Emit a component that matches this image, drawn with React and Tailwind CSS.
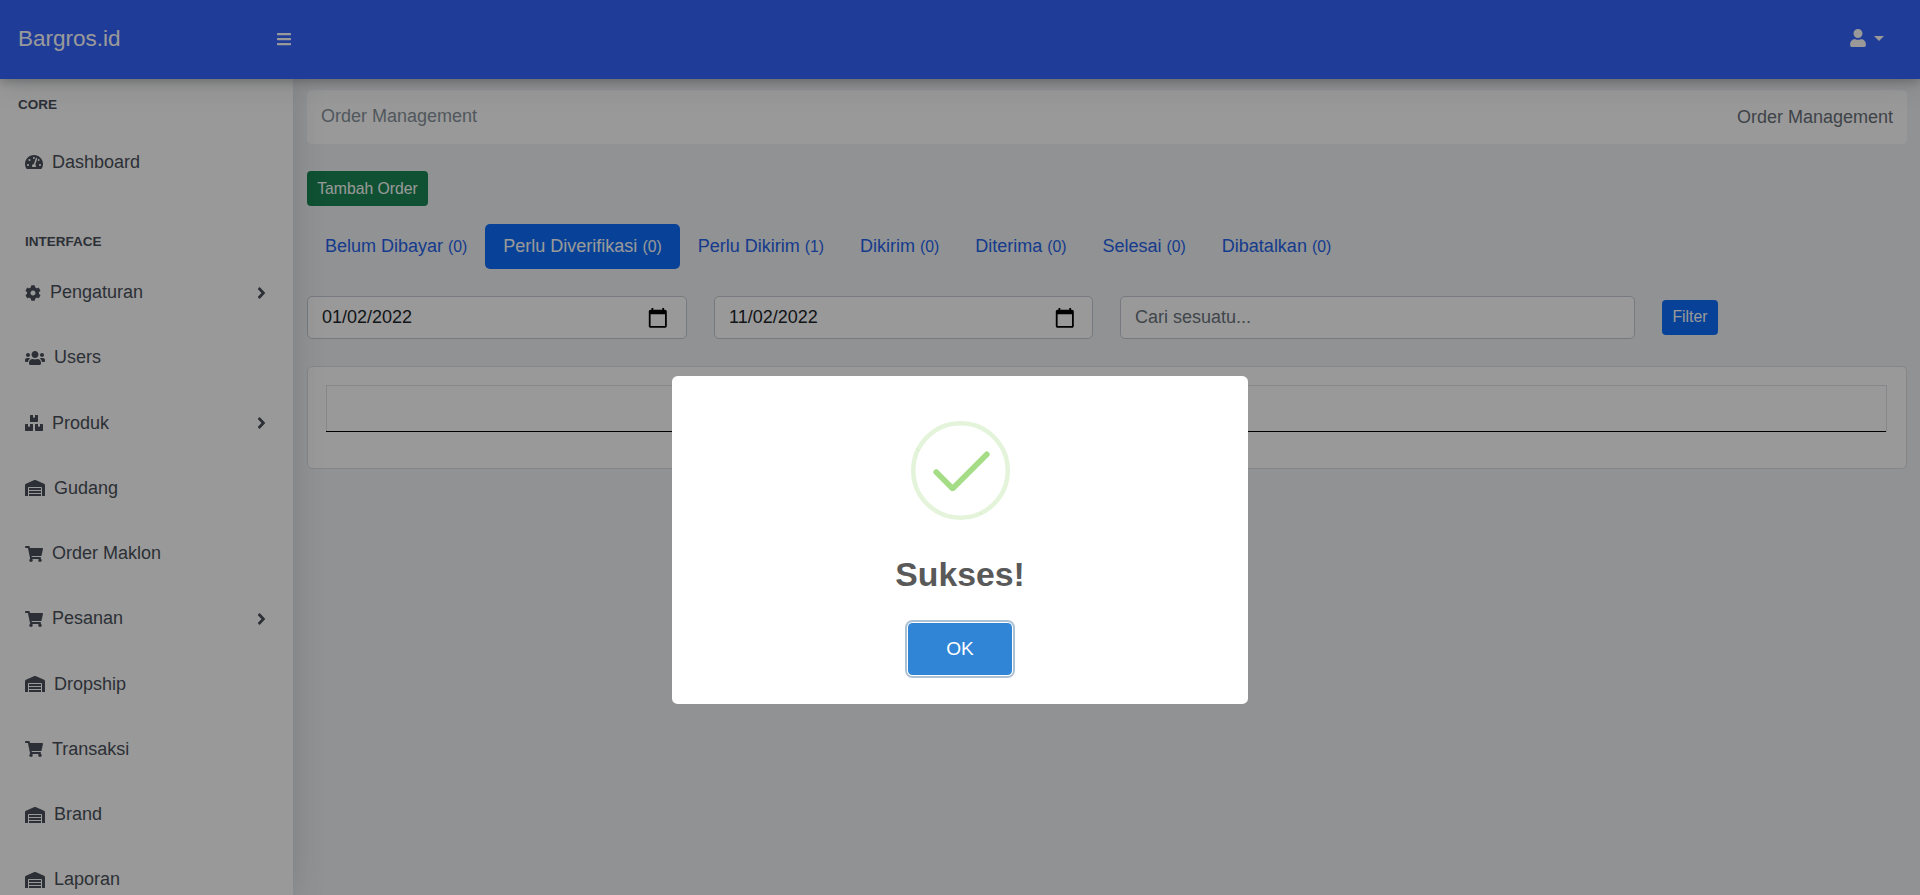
import React from "react";
import {
  FaTachometerAlt, FaCog, FaUsers, FaBoxes, FaWarehouse, FaShoppingCart,
  FaAngleRight, FaBars, FaUser,
} from "react-icons/fa";

const MENU = [
  { label: "Pengaturan", icon: FaCog, size: "w-4", arrow: true },
  { label: "Users", icon: FaUsers, size: "w-5" },
  { label: "Produk", icon: FaBoxes, size: "w-[18px]", arrow: true },
  { label: "Gudang", icon: FaWarehouse, size: "w-5" },
  { label: "Order Maklon", icon: FaShoppingCart, size: "w-[18px]" },
  { label: "Pesanan", icon: FaShoppingCart, size: "w-[18px]", arrow: true },
  { label: "Dropship", icon: FaWarehouse, size: "w-5" },
  { label: "Transaksi", icon: FaShoppingCart, size: "w-[18px]" },
  { label: "Brand", icon: FaWarehouse, size: "w-5" },
  { label: "Laporan", icon: FaWarehouse, size: "w-5" },
];

const TABS = [
  { label: "Belum Dibayar", count: 0 },
  { label: "Perlu Diverifikasi", count: 0, active: true },
  { label: "Perlu Dikirim", count: 1 },
  { label: "Dikirim", count: 0 },
  { label: "Diterima", count: 0 },
  { label: "Selesai", count: 0 },
  { label: "Dibatalkan", count: 0 },
];

function MenuItem({ label, icon: Icon, size, arrow }) {
  return (
    <a className="flex h-[65.25px] shrink-0 items-center pl-[25px] pr-[27px]">
      <Icon className={`${size} h-4 shrink-0`} />
      <span className="ml-[9px]">{label}</span>
      {arrow && <FaAngleRight className="ml-auto h-[18px] w-[9px]" />}
    </a>
  );
}

function Header() {
  return (
    <header className="relative z-20 flex h-[79px] shrink-0 items-center bg-[#3664ff] text-white shadow-[0_2.7px_31.5px_0_rgba(33,40,50,0.15),0_2px_10px_0_rgba(33,40,50,0.3)]">
      <span className="w-[277px] pb-[2px] pl-[18px] text-[22.5px] leading-[34px]">Bargros.id</span>
      <FaBars className="mb-px h-4 w-[14px]" />
      <div className="ml-auto mr-9 flex items-center gap-2 pb-[3px]">
        <FaUser className="h-[18px] w-4" />
        <span className="border-x-[5.4px] border-t-[5.4px] border-x-transparent border-t-white" />
      </div>
    </header>
  );
}

function Sidebar() {
  return (
    <aside className="relative z-10 flex w-[293px] shrink-0 flex-col overflow-hidden bg-white text-[#4a515b]">
      <h2 className="pl-[18px] pt-4 text-[13.5px] font-bold leading-5">CORE</h2>
      <div className="mt-[14.4px] flex flex-col">
        <MenuItem label="Dashboard" icon={FaTachometerAlt} size="w-[18px]" />
      </div>
      <h2 className="pl-[25px] pt-[37.6px] text-[13.5px] font-bold leading-5">INTERFACE</h2>
      <nav className="mt-[7.75px] flex flex-col">
        {MENU.map((m) => <MenuItem key={m.label} {...m} />)}
      </nav>
    </aside>
  );
}

function DateField({ value, className }) {
  return (
    <div className={`flex h-[43px] items-center justify-between rounded-[5px] border border-[#c5ccd6] bg-white pl-[14px] text-[#212529] ${className}`}>
      <span>{value}</span>
      <svg viewBox="0 0 24 24" className="size-[21.6px]" fill="#000">
        <path d="M20 3h-1V1h-2v2H7V1H5v2H4c-1.1 0-2 .9-2 2v16c0 1.1.9 2 2 2h16c1.1 0 2-.9 2-2V5c0-1.1-.9-2-2-2zm0 18H4V8h16v13z" />
      </svg>
    </div>
  );
}

function Content() {
  return (
    <main className="flex grow flex-col pl-[14px] pr-[13px] pt-[11px]">
      <div className="flex h-[54px] items-center justify-between rounded-[5px] bg-white px-[14px]">
        <span className="pb-[2px] text-[#87939c]">Order Management</span>
        <span className="text-[#69707a]">Order Management</span>
      </div>
      <button className="mt-[27px] h-[35px] w-[121px] rounded-[4px] bg-[#198754] text-[15.75px] text-white">
        Tambah Order
      </button>
      <div className="mt-[18px] flex h-[45px]">
        {TABS.map((t) => (
          <a
            key={t.label}
            className={`flex items-center whitespace-pre rounded-[5px] px-[18px] ${t.active ? "bg-[#0d6efd] text-white" : "text-[#2563eb]"}`}
          >
            <span>{t.label} <span className="text-[15.75px]">({t.count})</span></span>
          </a>
        ))}
      </div>
      <div className="mt-[27px] flex items-center">
        <DateField value="01/02/2022" className="w-[380px] pr-[17px]" />
        <DateField value="11/02/2022" className="ml-[27px] w-[379px] pr-4" />
        <div className="ml-[27px] flex h-[43px] w-[515px] items-center rounded-[5px] border border-[#c5ccd6] bg-white pl-[14px] text-[#6c757d]">
          Cari sesuatu...
        </div>
        <button className="ml-[27px] h-[35px] w-[56px] rounded-[4px] bg-[#0d6efd] pb-[2px] text-[15.75px] text-white">
          Filter
        </button>
      </div>
      <section className="mt-[27px] h-[103px] rounded-[5px] border border-[#dfdfdf] bg-white py-[18px] pl-[18px] pr-[19px]">
        <div className="h-[47px] border border-b-0 border-[#dee2e6]">
          <div className="-ml-px h-[46px] border-b border-black" />
        </div>
      </section>
    </main>
  );
}

function SuccessIcon() {
  return (
    <svg viewBox="0 0 5.5 5.5" className="size-[99px]">
      <circle cx="2.75" cy="2.75" r="2.625" fill="none" stroke="#a5dc86" strokeOpacity="0.3" strokeWidth="0.25" />
      <path d="M.3 1.52l.13.16M3.84 5.07l.13.14" stroke="#a5dc86" strokeOpacity="0.4" strokeWidth="0.05" />
      <g fill="#a5dc86">
        <rect x="1.0625" y="3.125" width="1.5625" height="0.3125" rx="0.125" transform="rotate(45 1.84375 3.28125)" />
        <rect x="1.8125" y="2.625" width="2.9375" height="0.3125" rx="0.125" transform="rotate(-45 3.28125 2.78125)" />
      </g>
    </svg>
  );
}

function SuccessDialog() {
  return (
    <div className="absolute inset-0 z-30 flex items-start justify-center bg-black/40 pt-[376px]">
      <div role="dialog" className="flex h-[328px] w-[576px] flex-col items-center rounded-[5.6px] bg-white pt-[45px]">
        <SuccessIcon />
        <h1 className="mt-[29px] text-[33.75px] font-bold leading-[50px] text-[#595959]">Sukses!</h1>
        <button className="mt-[24px] h-[52px] w-[104px] rounded-[4.5px] bg-[#3085d6] pb-[2px] text-[19.125px] text-white shadow-[0_0_0_1px_#fff,0_0_0_3px_rgba(50,100,150,0.4)]">
          OK
        </button>
      </div>
    </div>
  );
}

export default function App() {
  return (
    <div className="relative flex h-[895px] w-[1920px] flex-col overflow-hidden bg-[#f1f3f6] font-['Liberation_Sans',Arial,sans-serif] text-[18px] leading-[27px]">
      <Header />
      <div className="flex min-h-0 grow">
        <div className="relative z-10 flex shadow-[0_2.7px_31.5px_0_rgba(33,40,50,0.15)]">
          <Sidebar />
        </div>
        <Content />
      </div>
      <SuccessDialog />
    </div>
  );
}
